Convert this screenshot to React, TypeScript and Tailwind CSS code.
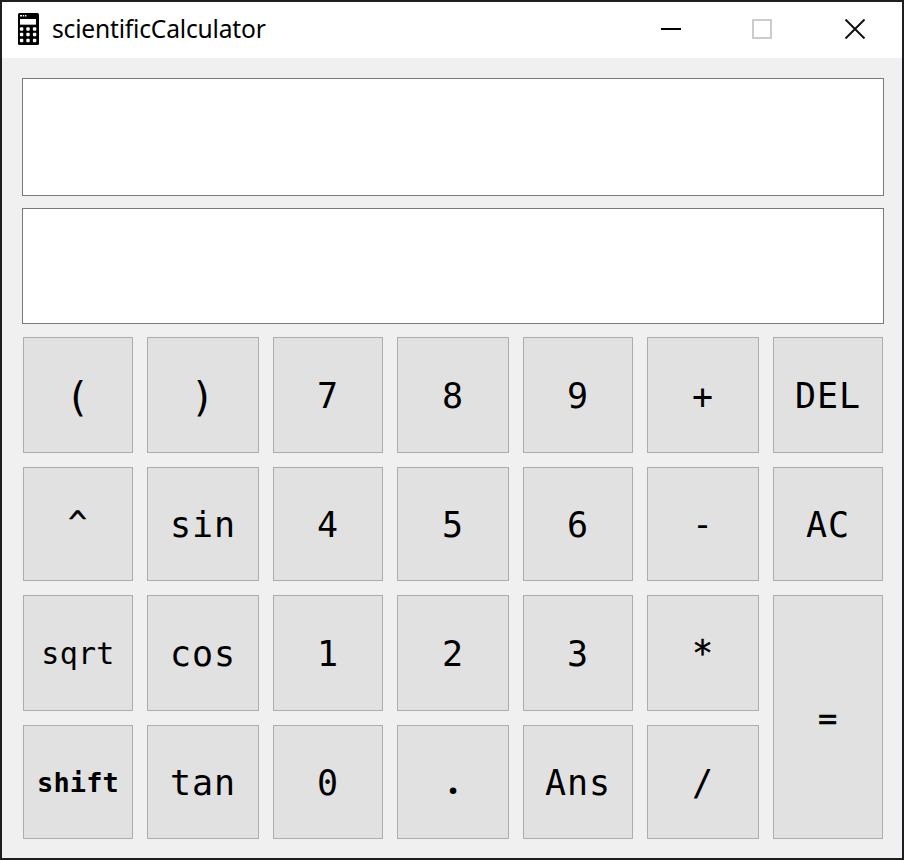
type KeyDef = { label: string; text?: string; box?: string };

const MONO = "font-['DejaVu_Sans_Mono',monospace] tracking-[0.026em]";

const KEYS: KeyDef[] = [
  { label: "(", text: `${MONO} text-[40px] pt-1` },
  { label: ")", text: `${MONO} text-[40px] pt-1` },
  { label: "7" },
  { label: "8" },
  { label: "9" },
  { label: "+", text: `${MONO} text-[35px] pt-1` },
  { label: "DEL" },
  { label: "^", text: `${MONO} text-[31px] pb-1 [-webkit-text-stroke:0.4px_black]` },
  { label: "sin" },
  { label: "4" },
  { label: "5" },
  { label: "6" },
  { label: "-", text: `${MONO} text-[35px]` },
  { label: "AC" },
  { label: "sqrt", text: "font-['DejaVu_Sans_Mono',monospace] text-[30px] pt-0.5 tracking-[0.01em]" },
  { label: "cos" },
  { label: "1" },
  { label: "2" },
  { label: "3" },
  { label: "*", text: `${MONO} text-[35px] [-webkit-text-stroke:0.4px_black]` },
  { label: "=", text: `${MONO} text-[32px] pt-1 [-webkit-text-stroke:0.4px_black]`, box: "row-span-2" },
  { label: "shift", text: "font-['DejaVu_Sans_Mono',monospace] text-[27px] font-bold tracking-[0.005em]" },
  { label: "tan" },
  { label: "0" },
  { label: ".", text: "font-['Noto_Sans',sans-serif] font-semibold text-[42px] pb-2" },
  { label: "Ans" },
  { label: "/" },
];

function Key({ label, text = `${MONO} text-[35px] pt-0.5`, box = "" }: KeyDef) {
  return (
    <button
      className={`flex items-center justify-center border border-[#adadad] bg-[#e1e1e1] text-black ${box}`}
    >
      <span className={`leading-none ${text}`}>{label}</span>
    </button>
  );
}

function CalculatorIcon() {
  return (
    <svg className="mb-0.5" width="21" height="32" viewBox="0 0 21 32">
      <rect width="21" height="32" rx="1.5" fill="#000" />
      <path d="M2 2h2v1.6h-2zM4.8 2h1.4v1.6h-1.4zM7 2h1.4v1.6h-1.4z" fill="#fff" />
      <rect x="2" y="6" width="16" height="6" fill="#fff" />
      <rect x="2" y="11" width="16" height="1" fill="#aaa" />
      <g fill="#fff">
        {[16, 21.5, 27.5].map((y) =>
          [3.6, 10, 16.6].map((x) => (
            <rect key={`${x}-${y}`} x={x - 1.7} y={y - 1.7} width="3.4" height="3.4" rx="1" />
          )),
        )}
      </g>
    </svg>
  );
}

export default function App() {
  return (
    <div className="flex h-[860px] w-[904px] flex-col border-2 border-[#1e1e20] bg-[#f0f0f0]">
      <header className="flex h-14 shrink-0 items-center bg-white pl-4">
        <CalculatorIcon />
        <h1 className="ml-[13px] flex-1 pb-0.5 font-['Noto_Sans',sans-serif] text-[24.6px] leading-none tracking-[-0.008em] text-black">
          scientificCalculator
        </h1>
        <div className="flex items-center pr-[36px] pb-0.5">
          <svg className="mr-[71px]" width="20" height="20" viewBox="0 0 20 20">
            <path d="M0 10h20" stroke="#000" strokeWidth="2" />
          </svg>
          <svg className="mr-[72px]" width="20" height="20" viewBox="0 0 20 20">
            <rect x="1" y="1" width="18" height="18" fill="none" stroke="#ccc" strokeWidth="2" />
          </svg>
          <svg width="22" height="20" viewBox="0 0 22 20">
            <path d="M1.5 0.5l19 19M20.5 0.5l-19 19" stroke="#111" strokeWidth="2" />
          </svg>
        </div>
      </header>
      <main className="flex flex-col px-5 pt-5">
        <div className="h-[118px] w-[862px] border border-[#7a7a7a] bg-white" />
        <div className="mt-3 h-[116px] w-[862px] border border-[#7a7a7a] bg-white" />
        <div className="mt-[13px] ml-px grid grid-cols-[110px_112px_110px_112px_110px_112px_110px] grid-rows-[116px_114px_116px_114px] gap-[14px]">
          {KEYS.map((k) => (
            <Key key={k.label} {...k} />
          ))}
        </div>
      </main>
    </div>
  );
}
